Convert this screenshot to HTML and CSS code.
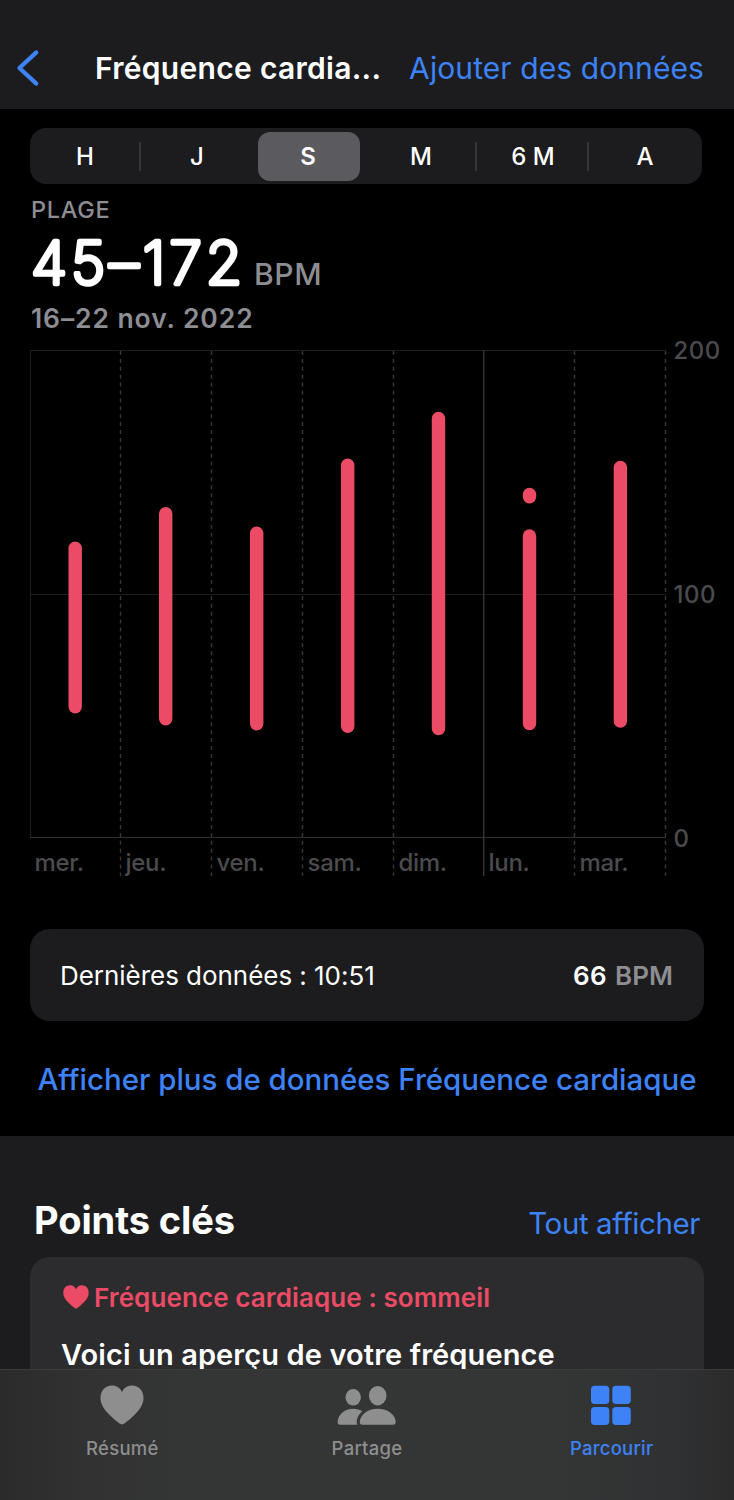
FILE: index.html
```html
<!DOCTYPE html>
<html lang="fr">
<head>
<meta charset="utf-8">
<title>Fréquence cardiaque</title>
<link rel="stylesheet" href="styles.css">
</head>
<body>
<div class="app">
  <header class="navbar">
    <svg class="back" width="24" height="38" viewBox="0 0 24 38"><path d="M20.3 3.4 3.4 19l16.900 15.600" fill="none" stroke="currentColor" stroke-width="4.200" stroke-linecap="round" stroke-linejoin="round"/></svg>
    <h1 class="nav-title">Fréquence cardia...</h1>
    <a class="nav-action">Ajouter des données</a>
  </header>

  <main class="summary">
    <nav class="segments">
      <span class="segment">H</span>
      <span class="segment divided">J</span>
      <span class="segment selected">S</span>
      <span class="segment">M</span>
      <span class="segment divided">6 M</span>
      <span class="segment divided">A</span>
    </nav>
    <div class="range-label">PLAGE</div>
    <div class="range">
      <svg class="range-value" width="224" height="60"><text x="1" y="52">45–172</text></svg>
      <span class="range-unit">BPM</span>
    </div>
    <div class="range-date">16–22 nov. 2022</div>

    <svg class="chart" width="734" height="550" viewBox="0 335 734 550">
      <g class="frame">
        <path d="M30 350.5H666M30.5 350V838M30 594.5H666"/>
        <path class="axis" d="M30 837.5H666"/>
      </g>
      <path class="dashes" d="M120.5 351V876M211.5 351V876M302.5 351V876M393.5 351V876M574.5 351V876M665.5 351V876"/>
      <path class="week" d="M483.7 350V876"/>
      <g class="bars">
        <rect x="68.5" y="541.5" width="13.4" height="172" rx="6.7"/>
        <rect x="159" y="507" width="13.4" height="218.5" rx="6.7"/>
        <rect x="250" y="526.5" width="13.4" height="204" rx="6.7"/>
        <rect x="341" y="458.5" width="13.4" height="274.5" rx="6.7"/>
        <rect x="431.8" y="411.7" width="13.4" height="323.5" rx="6.7"/>
        <rect x="522.8" y="487.7" width="13.4" height="15.8" rx="6.7"/>
        <rect x="522.8" y="529.2" width="13.4" height="201" rx="6.7"/>
        <rect x="613.7" y="460.7" width="13.4" height="267" rx="6.7"/>
      </g>
      <g class="scale">
        <text x="673.500" y="359">200</text><text x="673.500" y="603">100</text><text x="673.500" y="847">0</text>
      </g>
      <g class="days">
        <text x="34.500" y="871">mer.</text><text x="125.500" y="871">jeu.</text><text x="216.500" y="871">ven.</text><text x="307.500" y="871">sam.</text><text x="398.500" y="871">dim.</text><text x="488.500" y="871">lun.</text><text x="579.500" y="871">mar.</text>
      </g>
    </svg>

    <div class="latest">
      <span class="latest-label">Dernières données : 10:51</span>
      <span class="latest-value"><b>66</b><span class="unit">BPM</span></span>
    </div>
    <a class="more">Afficher plus de données Fréquence cardiaque</a>
  </main>

  <section class="highlights">
    <div class="highlights-head">
      <h2>Points clés</h2>
      <a class="all">Tout afficher</a>
    </div>
    <article class="card">
      <div class="card-topic">
        <svg width="26" height="24" viewBox="0 0 44 40" preserveAspectRatio="none"><path fill="currentColor" d="M22 39.600C20.700 39.600 14 34.500 8.200 28.500C3.700 23.800.500 19 .500 13C.500 5.800 5.300.600 12 .600C16.600.600 20 3 22 6.900C24 3 27.400.600 32 .600C38.700.600 43.500 5.800 43.500 13C43.500 19 40.300 23.800 35.800 28.500C30 34.500 23.300 39.600 22 39.600Z"/></svg>
        <span>Fréquence cardiaque : sommeil</span>
      </div>
      <p class="card-text">Voici un aperçu de votre fréquence</p>
    </article>
  </section>

  <footer class="tabbar">
    <a class="tab">
      <svg width="44" height="40" viewBox="0 0 44 40"><path fill="currentColor" d="M22 39.600C20.700 39.600 14 34.500 8.200 28.500C3.700 23.800.500 19 .500 13C.500 5.800 5.300.600 12 .600C16.600.600 20 3 22 6.900C24 3 27.400.600 32 .600C38.700.600 43.500 5.800 43.500 13C43.500 19 40.300 23.800 35.800 28.500C30 34.500 23.300 39.600 22 39.600Z"/></svg>
      <span>Résumé</span>
    </a>
    <a class="tab">
      <svg width="60" height="40" viewBox="1 0 60 40"><g fill="currentColor"><ellipse cx="17.200" cy="12.300" rx="7.700" ry="8.300"/><ellipse cx="41.700" cy="10.700" rx="8.800" ry="9.700"/><path d="M4 39.700Q1.600 39.700 1.600 37C1.800 30 8.500 23.800 17.300 23.800C20.800 23.800 23.800 24.800 26.300 26.300C23.300 29 20.700 33 20.700 37Q20.700 38.600 21.500 39.700Z"/><path d="M26.500 39.700Q23.700 39.700 23.700 37C24 30 31.500 23.800 41.700 23.800C52 23.800 59.500 30 59.700 37Q59.700 39.700 57 39.700Z"/></g></svg>
      <span>Partage</span>
    </a>
    <a class="tab active">
      <svg width="42" height="40" viewBox="1.300 0 42 40"><g fill="currentColor"><rect x="1.300" y=".700" width="18.300" height="18.300" rx="3.700"/><rect x="22.600" y=".700" width="18.500" height="18.300" rx="3.700"/><rect x="1.300" y="22" width="18.300" height="18" rx="3.700"/><rect x="22.600" y="22" width="18.500" height="18" rx="3.700"/></g></svg>
      <span>Parcourir</span>
    </a>
  </footer>
</div>
</body>
</html>
```
FILE: styles.css
```css
* { box-sizing: border-box; }

body {
  margin: 0;
  background: #000;
  color: #fff;
  font-family: Inter, "Liberation Sans", sans-serif;
}

h1, h2, p { margin: 0; }

a { color: #3e82f7; }

.app {
  position: relative;
  display: flex;
  flex-direction: column;
  width: 734px;
  height: 1500px;
  overflow: hidden;
}

.navbar {
  display: flex;
  align-items: center;
  flex: none;
  height: 109px;
  padding: 26px 30px 0 16px;
  background: #1c1c1e;
  white-space: nowrap;
}

.back { color: #3e82f7; }

.nav-title {
  margin-left: 55px;
  font-size: 30px;
  line-height: 40px;
  font-weight: 600;
  letter-spacing: 0.3px;
}

.nav-action {
  margin-left: auto;
  font-size: 30px;
  line-height: 40px;
  letter-spacing: 0.09px;
}

.summary {
  display: flex;
  flex-direction: column;
  flex: none;
  height: 1027px;
  padding: 19px 30px 0;
}

.segments {
  display: grid;
  grid-template-columns: repeat(6, 1fr);
  flex: none;
  width: 672px;
  height: 56px;
  padding: 4px 0;
  border-radius: 16px;
  background: #1c1c1e;
  font-size: 24px;
  font-weight: 500;
  line-height: 49px;
  text-align: center;
}

.segment {
  position: relative;
  padding-right: 2px;
}

.selected {
  width: 102px;
  margin-left: 4px;
  border-radius: 12px;
  background: #5b5a5f;
  font-weight: 600;
}

.divided::before {
  content: "";
  position: absolute;
  left: -3px;
  top: 10px;
  width: 2px;
  height: 29px;
  background: #363639;
}

.range-label {
  margin-top: 9px;
  padding-left: 1px;
  height: 33px;
  color: #8d8d92;
  font-size: 23.5px;
  line-height: 33px;
  font-weight: 500;
  letter-spacing: 0.7px;
}

.range {
  display: flex;
  height: 74px;
  padding-top: 6px;
}

.range-value {
  overflow: visible;
  fill: #fff;
  stroke: #fff;
  stroke-width: 4.4px;
  stroke-linejoin: round;
  font-size: 59px;
  font-weight: 200;
  letter-spacing: 4px;
}

.range-unit {
  padding-top: 22px;
  color: #8d8d92;
  font-size: 30px;
  line-height: 40px;
  font-weight: 500;
  letter-spacing: 0.6px;
}

.range-date {
  height: 36px;
  padding-left: 1px;
  color: #8d8d92;
  font-size: 26.5px;
  line-height: 36px;
  font-weight: 600;
  letter-spacing: 0.9px;
}

.chart {
  flex: none;
  margin: -1px -30px 0;
  font-size: 24px;
}

.frame { fill: none; stroke: #1d1d1e; }
.axis { stroke: #303032; }
.dashes { fill: none; stroke: #363638; stroke-width: 1.4; stroke-dasharray: 4 3.9; }
.week { stroke: #363638; stroke-width: 1.4; }
.bars { fill: #eb4b64; }
.scale { fill: #4b4b4d; letter-spacing: 0.5px; font-weight: 500; }
.days { fill: #4b4b4d; letter-spacing: -0.3px; font-weight: 500; }

.latest {
  display: flex;
  align-items: center;
  justify-content: space-between;
  flex: none;
  height: 92px;
  margin-top: 44px;
  padding: 1px 31px 0 30px;
  border-radius: 20px;
  background: #1c1c1e;
  font-size: 26px;
  line-height: 40px;
}

.latest-label { letter-spacing: -0.04px; }

.latest-value b { font-weight: 600; letter-spacing: 0.4px; }

.latest-value .unit {
  margin-left: 8px;
  color: #8d8d92;
  font-weight: 600;
}

.more {
  margin-top: 38px;
  font-size: 29.5px;
  line-height: 40px;
  font-weight: 450;
  letter-spacing: -0.03px;
  text-align: center;
  white-space: nowrap;
}

.highlights {
  flex: 1;
  padding: 64px 30px 0;
  background: #1c1c1e;
}

.highlights-head {
  display: flex;
  justify-content: space-between;
  height: 57px;
  padding: 0 4px 0 4px;
}

.highlights-head h2 {
  font-size: 38px;
  line-height: 40px;
  font-weight: 700;
  letter-spacing: -0.1px;
}

.all {
  padding-top: 3px;
  font-size: 29.5px;
  line-height: 41px;
  letter-spacing: -0.39px;
}

.card {
  height: 260px;
  padding: 20px 31px;
  border-radius: 20px;
  background: #2c2c2e;
}

.card-topic {
  display: flex;
  align-items: center;
  gap: 5px;
  height: 40px;
  padding-left: 2px;
  color: #eb4b64;
  font-size: 26px;
  font-weight: 600;
  letter-spacing: 0.1px;
}

.card-text {
  margin-top: 18px;
  font-size: 29px;
  line-height: 40px;
  font-weight: 600;
  letter-spacing: 0.1px;
  white-space: nowrap;
}

.tabbar {
  position: absolute;
  left: 0;
  right: 0;
  bottom: 0;
  display: grid;
  grid-template-columns: repeat(3, 1fr);
  height: 131px;
  padding-top: 15px;
  border-top: 1px solid #3b3b3c;
  background: linear-gradient(90deg, #2b2b2c 0, #323233 12%, #343535 25%, #343535 75%, #303132 92%, #2b2b2c 100%);
}

.tab {
  display: flex;
  flex-direction: column;
  align-items: center;
  gap: 8px;
  color: #8e8e8e;
  font-size: 18.5px;
  line-height: 30px;
  font-weight: 500;
  letter-spacing: 0.25px;
}

.tab.active { color: #3e82f7; }
```
